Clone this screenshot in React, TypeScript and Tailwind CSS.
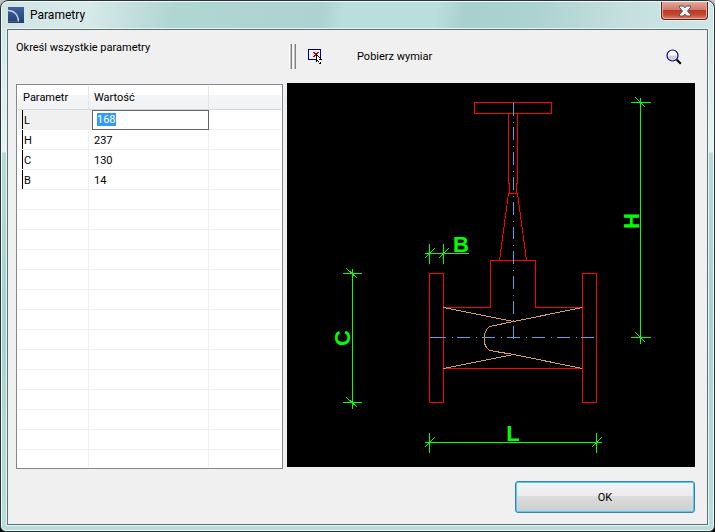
import { useState } from 'react';
import type { ChangeEvent, ReactNode } from 'react';

interface Param {
  name: string;
  value: string;
}

const initialParams: Param[] = [
  { name: 'L', value: '168' },
  { name: 'H', value: '237' },
  { name: 'C', value: '130' },
  { name: 'B', value: '14' },
];

const EMPTY_ROWS = 13;

function AppIcon() {
  return (
    <svg width="16" height="16" viewBox="0 0 16 16" aria-hidden="true">
      <defs>
        <linearGradient id="appIcon" x1="0" y1="0" x2="0" y2="1">
          <stop offset="0" stopColor="#3f6299" />
          <stop offset="1" stopColor="#263f70" />
        </linearGradient>
      </defs>
      <rect width="16" height="16" fill="url(#appIcon)" />
      <path d="M0 3.5C6 3.5 10.5 8 10.5 14.5" fill="none" stroke="#c3d0e4" strokeWidth="1.3" />
      <path d="M0 14.5h10.5" stroke="#5c78a6" strokeWidth="0.6" />
    </svg>
  );
}

function CloseIcon() {
  return (
    <svg width="14" height="12" viewBox="0 0 14 12" aria-hidden="true">
      <path
        d="M1.500 1h4L7 2.800 8.500 1h4v1.500L9.500 6l3 3.500V11h-4L7 9.200 5.500 11h-4V9.500l3-3.500-3-3.500z"
        fill="#f4f4f4"
        stroke="#4a4f63"
        strokeWidth="1"
      />
    </svg>
  );
}

function PickIcon() {
  return (
    <svg width="16" height="16" viewBox="0 0 16 16" aria-hidden="true">
      <rect x="0.5" y="0.5" width="12" height="10" fill="#f4f4f8" stroke="#000080" />
      <g shapeRendering="crispEdges">
        <path d="M5 3h2v1H5zM9 3h2v1H9zM6 4h4v1H6zM7 5h2v1H7zM6 6h3v1H6zM5 7h2v1H5z" fill="#e00000" />
        <path d="M8 5h1v1h1v1h1v1h1v1h1v1h1v1h-2v2h1v2h-2v-2h-1v-1h-1v1H8z" fill="#000" />
        <path d="M9 7h1v1h1v1h1v1h-1v1h1v3h-1v-2h-1v-1H9z" fill="#fff" />
      </g>
    </svg>
  );
}

function ZoomIcon() {
  return (
    <svg width="16" height="16" viewBox="0 0 16 16" aria-hidden="true">
      <circle cx="6.5" cy="6.5" r="5.5" fill="#fff" />
      <path d="M2 6.5h9a4.5 4.5 0 0 1-9 0z" fill="#cfcfe4" />
      <circle cx="6.5" cy="6.5" r="5.5" fill="none" stroke="#000080" strokeWidth="1.2" />
      <path d="M10.8 10.8l4 4" stroke="#000" strokeWidth="2.2" />
    </svg>
  );
}

function DimLabel({ transform, children }: { transform: string; children: ReactNode }) {
  return (
    <text
      transform={transform}
      textAnchor="middle"
      className="fill-[#00ff00] stroke-none font-['Liberation_Sans',sans-serif] text-[22px] font-bold"
    >
      {children}
    </text>
  );
}

function ValveDrawing() {
  return (
    <svg viewBox="0 0 408 384" className="block h-auto w-full bg-black" role="img" aria-label="L H C B">
      <g transform="translate(0.5 0.5)" fill="none" strokeWidth="1" shapeRendering="crispEdges">
        {/* valve body */}
        <g stroke="#ff0000">
          <path d="M187 19h77v11h-77z" />
          <path d="M221 30v70h1v10M230 30v70h-1v10M221 110h9" />
          <path d="M221 110l-9 67M230 110l9 67" />
          <path d="M156 224h47v-47h45v47h47M156 285h139" />
          <path d="M142 190h14v129h-14zM295 190h14v129h-14z" />
        </g>

        {/* wedge */}
        <g stroke="#d69c6b">
          <path d="M156 224l70 14M156 285l70-14" />
          <path d="M295 224l-69 14-24 5-3 3-2 5v9l2 4 3 3 24 4 69 14" />
        </g>

        {/* axes */}
        <g stroke="#63a0d8">
          <path d="M226 19v236" strokeDasharray="13 6 1 4.8" />
          <path d="M142 254h4" />
          <path d="M145 254h164" strokeDasharray="13 6 1 4.8" />
        </g>

        {/* dimensions */}
        <g stroke="#00ff00">
          <path d="M353 14v246M343 19h20M343 254h20M348 14l10 10M348 249l10 10" />
          <path d="M65 185v140M55 190h19M55 319h19M59 185l11 10M59 314l11 10" />
          <path d="M137 170h44M142 160v20M156 160v20M137 175l10-10M151 175l10-10" />
          <path d="M137 359h177M142 349v20M309 349v20M137 364l10-10M304 364l10-10" />
        </g>
      </g>
      <DimLabel transform="translate(174 169)">B</DimLabel>
      <DimLabel transform="translate(226 358)">L</DimLabel>
      <DimLabel transform="translate(63 255) rotate(-90)">C</DimLabel>
      <DimLabel transform="translate(352 138) rotate(-90)">H</DimLabel>
    </svg>
  );
}

function ParamTable() {
  const [params, setParams] = useState<Param[]>(initialParams);

  const handleChange = (name: string, value: string) => {
    setParams(params.map((p) => (p.name === name ? { ...p, value } : p)));
  };

  return (
    <div className="mt-px border border-[#828790] bg-white p-px">
      <table className="w-full table-fixed border-separate border-spacing-0 text-left">
        <colgroup>
          <col className="w-[71px]" />
          <col className="w-[120px]" />
          <col />
        </colgroup>
        <thead>
          <tr className="h-6">
            <th className="border-r border-b border-r-[#e2e4e7] border-b-[#d5d5d5] bg-[linear-gradient(#fff_40%,#f5f6f8_40%,#f1f2f4)] p-0 pt-0.5 pl-[5px] font-normal">Parametr</th>
            <th className="border-r border-b border-r-[#e2e4e7] border-b-[#d5d5d5] bg-[linear-gradient(#fff_40%,#f5f6f8_40%,#f1f2f4)] p-0 pt-0.5 pl-[5px] font-normal">Wartość</th>
            <th className="border-b border-b-[#d5d5d5] bg-[linear-gradient(#fff_40%,#f5f6f8_40%,#f1f2f4)] p-0" />
          </tr>
        </thead>
        <tbody>
          {params.map((p, i) => (
            <tr key={p.name} className="h-5">
              <td className={i === 0 ? 'border-r border-b border-[#f0f0f0] bg-[#f0f0f0] p-0 pl-1' : 'border-r border-b border-[#f0f0f0] p-0 pl-1'}>
                <label htmlFor={`param-${p.name}`} className="block h-[19px] border-l border-black pl-px leading-[21px]">{p.name}</label>
              </td>
              <td className={i === 0 ? 'bg-[#f0f0f0] p-0 pl-[3px]' : 'border-r border-b border-[#f0f0f0] p-0 pl-[5px]'}>
                <input
                  id={`param-${p.name}`}
                  value={p.value}
                  autoFocus={i === 0}
                  onFocus={(e) => e.target.select()}
                  onChange={(e: ChangeEvent<HTMLInputElement>) => handleChange(p.name, e.target.value)}
                  className={
                    i === 0
                      ? 'block h-5 w-full border border-[#646464] bg-white pb-px pl-1 outline-none selection:bg-[#3399ff] selection:text-white'
                      : 'block h-[19px] w-full bg-transparent pt-0.5 outline-none'
                  }
                />
              </td>
              <td className="border-b border-[#f0f0f0] p-0" />
            </tr>
          ))}
          {Array.from({ length: EMPTY_ROWS }, (_, i) => (
            <tr key={i} className="h-5">
              <td className="border-r border-b border-[#f0f0f0] p-0" />
              <td className="border-r border-b border-[#f0f0f0] p-0" />
              <td className="border-b border-[#f0f0f0] p-0" />
            </tr>
          ))}
          <tr className="h-[17px]">
            <td className="border-r border-[#f0f0f0] p-0" />
            <td className="border-r border-[#f0f0f0] p-0" />
            <td className="p-0" />
          </tr>
        </tbody>
      </table>
    </div>
  );
}

export default function App() {
  return (
    <div className="flex min-h-screen flex-col bg-[linear-gradient(#c8c8c8,#000_40px)] font-[Roboto,'Noto_Sans',sans-serif] text-[11px] text-black">
      <div className="flex flex-1 flex-col rounded-t-lg rounded-b-md border border-[#2a3335] bg-[#eefafa] p-px">
        <div className="flex flex-1 flex-col rounded-t-md rounded-b-sm bg-[linear-gradient(#cfe4e4,#e8f3f3_150px,#b4dad9_151px,#a9d0d0_60%,#b8dddd)]">
          <header className="flex h-[26px] items-center rounded-t-md bg-[linear-gradient(100deg,#cfe4e3,#d8eae9_12%,#b0d6d4_24%,#add2d1_45%,#badedd_48%,#badedd_61%,#a9cfcf_65%,#add2d2_75%,#c6e0e0_88%,#cfe5e6)] pl-1.5">
            <AppIcon />
            <h1 className="ml-1.5 flex-1 text-xs">Parametry</h1>
            <button
              type="button"
              aria-label="Zamknij"
              className="mr-[5px] flex h-[18px] w-[47px] items-center justify-center self-start rounded-b border border-t-0 border-[#5a1f1a] bg-[linear-gradient(#e2a79c,#d27a6b_45%,#b83a25_50%,#c04a32_75%,#dc8468)] shadow-[0_0_0_1px_#e4f1f1,inset_0_0_0_1px_#eba798]"
            >
              <CloseIcon />
            </button>
          </header>

          <div className="mx-1 mb-1 flex flex-1 flex-col border border-[#e4f6f6]">
            <main className="flex flex-1 flex-col border border-[#5f6f70] bg-[#f0f0f0] pr-3 pb-[11px] pl-2">
              <div className="grid grid-cols-[267px_minmax(0,1fr)] items-start gap-x-1">
                <p className="h-[53px] pt-2 leading-5">Określ wszystkie parametry</p>
                <div role="toolbar" className="flex h-[53px] items-center pr-[13px] pl-0.5">
                  <div className="flex h-[25px] gap-px">
                    <span className="w-[3px] border-r border-l border-r-[#808080] border-l-white bg-[#c0c0c0]" />
                    <span className="w-[3px] border-r border-l border-r-[#808080] border-l-white bg-[#c0c0c0]" />
                  </div>
                  <button type="button" className="ml-3 flex items-center gap-[33px]">
                    <PickIcon />
                    <span className="pt-0.5">Pobierz wymiar</span>
                  </button>
                  <button type="button" aria-label="Powiększ" className="ml-auto">
                    <ZoomIcon />
                  </button>
                </div>
                <ParamTable />
                <ValveDrawing />
              </div>

              <div className="mt-auto flex justify-end pt-3">
                <button
                  type="button"
                  className="h-8 w-[180px] rounded-[3px] border border-[#3c7fb1] bg-[linear-gradient(#f3f3f3,#ebebeb_48%,#dddddd_48%,#cdcdcd)] pt-0.5 shadow-[inset_0_0_0_1px_#47d0f8]"
                >
                  OK
                </button>
              </div>
            </main>
          </div>
        </div>
      </div>
    </div>
  );
}
